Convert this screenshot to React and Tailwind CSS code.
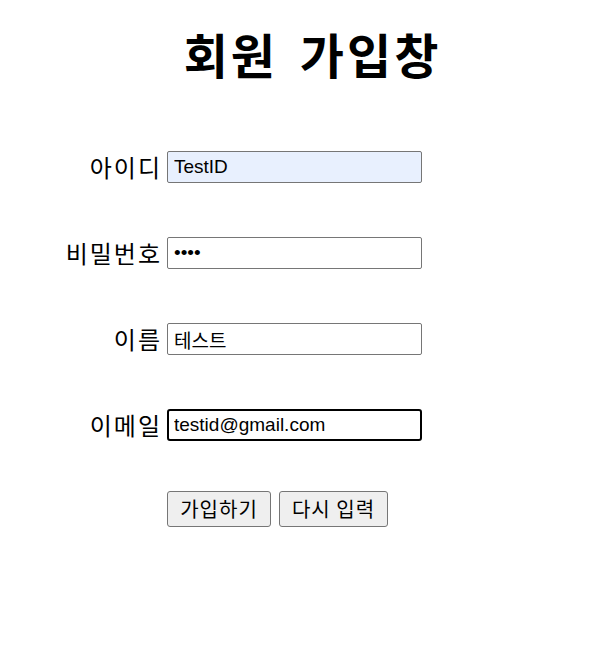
import React, { useState } from 'react';

function Row({ label, children }) {
  return (
    <div className="flex items-center h-[32px]">
      <label className="w-[167px] pr-[5px] text-right text-[24px] tracking-[2px] text-black font-['Noto_Sans_CJK_KR',sans-serif]">
        {label}
      </label>
      {children}
    </div>
  );
}

export default function App() {
  const [id, setId] = useState('TestID');
  const [pw, setPw] = useState('1234');
  const [name, setName] = useState('테스트');
  const [email, setEmail] = useState('testid@gmail.com');

  const inputCls =
    "w-[255px] h-[32px] text-[19px] text-black rounded-[2px] outline-none font-['Liberation_Sans','Noto_Sans_CJK_KR',sans-serif]";

  return (
    <div className="w-[590px] h-[653px] bg-white font-['Liberation_Sans','Noto_Sans_CJK_KR',sans-serif]">
      <div className="pl-[35px] pt-[29px]">
        <h1 className="text-center text-[48px] leading-[48px] font-bold tracking-[3px] [word-spacing:8px] text-black font-['Noto_Sans_CJK_KR',sans-serif]">
          회원 가입창
        </h1>
      </div>

      <form className="mt-[74px] flex flex-col gap-[54px]" onSubmit={(e) => e.preventDefault()}>
        <Row label="아이디">
          <input type="text" value={id} onChange={(e) => setId(e.target.value)} className={inputCls + ' px-[6px] border border-[#767676] bg-[#e8f0fe]'} />
        </Row>
        <Row label="비밀번호">
          <input type="password" value={pw} onChange={(e) => setPw(e.target.value)} className={inputCls + ' px-[6px] border border-[#767676] bg-white'} />
        </Row>
        <Row label="이름">
          <input type="text" value={name} onChange={(e) => setName(e.target.value)} className={inputCls + ' px-[6px] border border-[#767676] bg-white'} />
        </Row>
        <Row label="이메일">
          <input type="email" value={email} onChange={(e) => setEmail(e.target.value)} className={inputCls + ' px-[5px] border-2 border-black rounded-[3px] bg-white'} />
        </Row>
      </form>

      <div className="mt-[50px] pl-[167px] flex gap-[8px]">
        <button type="submit" className="w-[104px] h-[36px] text-[20px] tracking-[1px] text-black bg-[#efefef] border border-[#767676] rounded-[3px] font-['Noto_Sans_CJK_KR',sans-serif]">
          가입하기
        </button>
        <button type="reset" className="w-[109px] h-[36px] text-[20px] tracking-[1px] text-black bg-[#efefef] border border-[#767676] rounded-[3px] font-['Noto_Sans_CJK_KR',sans-serif]">
          다시 입력
        </button>
      </div>
    </div>
  );
}
